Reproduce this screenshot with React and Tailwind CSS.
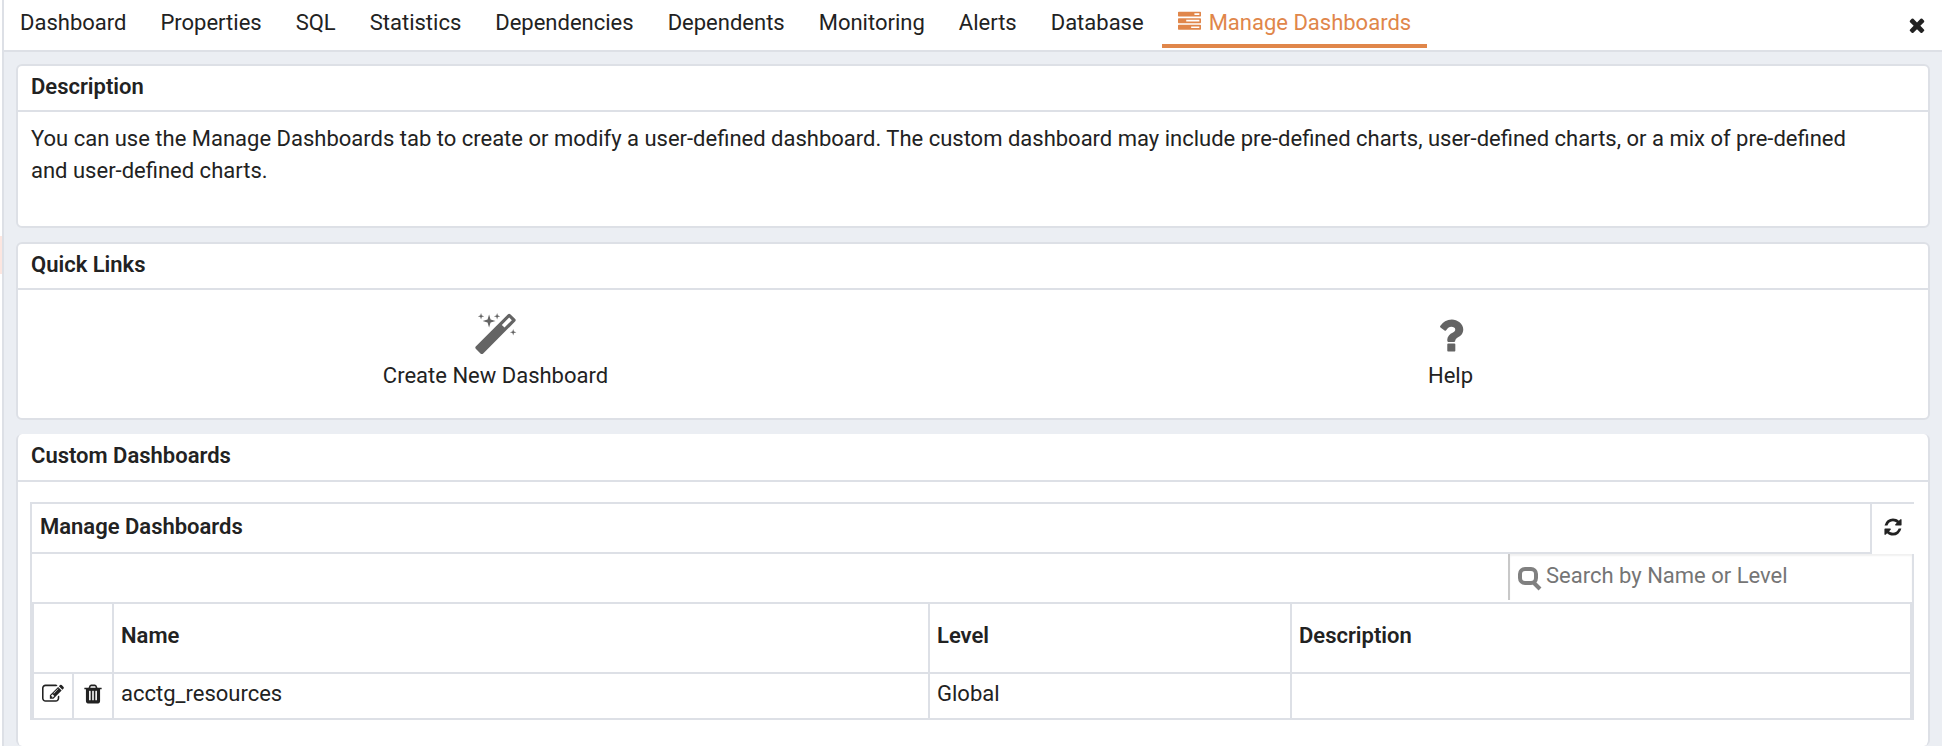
const ICONS = {
  tasks: "M1024 1408h640v-128h-640v128zm-384-512h1024v-128h-1024v128zm640-512h384v-128h-384v128zm512 832v256q0 26-19 45t-45 19h-1664q-26 0-45-19t-19-45v-256q0-26 19-45t45-19h1664q26 0 45 19t19 45zm0-512v256q0 26-19 45t-45 19h-1664q-26 0-45-19t-19-45v-256q0-26 19-45t45-19h1664q26 0 45 19t19 45zm0-512v256q0 26-19 45t-45 19h-1664q-26 0-45-19t-19-45v-256q0-26 19-45t45-19h1664q26 0 45 19t19 45z",
  refresh: "M1639 1056q0 5-1 7-64 268-268 434.5t-478 166.5q-146 0-282.5-55t-243.5-157l-129 129q-19 19-45 19t-45-19-19-45v-448q0-26 19-45t45-19h448q26 0 45 19t19 45-19 45l-137 137q71 66 161 102t187 36q134 0 250-65t186-179q11-17 53-117 8-23 30-23h192q13 0 22.5 9.5t9.5 22.5zm25-800v448q0 26-19 45t-45 19h-448q-26 0-45-19t-19-45 19-45l138-138q-148-137-349-137-134 0-250 65t-186 179q-11 17-53 117-8 23-30 23h-199q-13 0-22.5-9.5t-9.5-22.5v-7q65-268 270-434.5t480-166.5q146 0 284 55.5t245 156.5l130-129q19-19 45-19t45 19 19 45z",
  edit: "M888 1184l116-116-152-152-116 116v56h96v96h56zm440-720q-16-16-33 1l-350 350q-17 17-1 33t33-1l350-350q17-17 1-33zm80 594v190q0 119-84.5 203.5t-203.5 84.5h-832q-119 0-203.5-84.5t-84.5-203.5v-832q0-119 84.5-203.5t203.5-84.5h832q63 0 117 25 15 7 18 23 3 17-9 29l-49 49q-14 14-32 8-23-6-45-6h-832q-66 0-113 47t-47 113v832q0 66 47 113t113 47h832q66 0 113-47t47-113v-126q0-13 9-22l64-64q15-15 35-7t20 29zm-96-738l288 288-672 672h-288v-288zm444 132l-92 92-288-288 92-92q28-28 68-28t68 28l152 152q28 28 28 68t-28 68z",
  trash: "M704 1376v-704q0-14-9-23t-23-9h-64q-14 0-23 9t-9 23v704q0 14 9 23t23 9h64q14 0 23-9t9-23zm256 0v-704q0-14-9-23t-23-9h-64q-14 0-23 9t-9 23v704q0 14 9 23t23 9h64q14 0 23-9t9-23zm256 0v-704q0-14-9-23t-23-9h-64q-14 0-23 9t-9 23v704q0 14 9 23t23 9h64q14 0 23-9t9-23zm-544-992h448l-48-117q-7-9-17-11h-317q-10 2-17 11zm928 32v64q0 14-9 23t-23 9h-96v948q0 83-47 143.5t-113 60.5h-832q-66 0-113-58.5t-47-141.5v-952h-96q-14 0-23-9t-9-23v-64q0-14 9-23t23-9h309l70-167q15-37 54-63t79-26h320q40 0 79 26t54 63l70 167h309q14 0 23 9t9 23z",
  magic: "M1254 581l293-293-107-107-293 293zm447-293q0 27-18 45l-1286 1286q-18 18-45 18t-45-18l-198-198q-18-18-18-45t18-45l1286-1286q18-18 45-18t45 18l198 198q18 18 18 45zm-1351-190l98 30-98 30-30 98-30-98-98-30 98-30 30-98zm350 162l196 60-196 60-60 196-60-196-196-60 196-60 60-196zm930 478l98 30-98 30-30 98-30-98-98-30 98-30 30-98zm-640-640l98 30-98 30-30 98-30-98-98-30 98-30 30-98z",
  question: "M1088 1256v240q0 16-12 28t-28 12h-240q-16 0-28-12t-12-28v-240q0-16 12-28t28-12h240q16 0 28 12t12 28zm316-600q0 54-15.5 101t-35 76.5-55 59.5-57.5 43.5-61 35.5q-41 23-68.5 65t-27.5 67q0 17-12 32.5t-28 15.5h-240q-15 0-25.5-18.5t-10.5-37.5v-45q0-83 65-156.5t143-108.5q59-27 84-56t25-76q0-42-46.5-74t-107.5-32q-65 0-108 29-35 25-107 115-13 16-31 16-12 0-25-8l-164-125q-13-10-15.5-25t5.5-28q160-266 464-266 80 0 161 31t146 83 106 127.5 41 158.5z",
  times: "M1490 1322q0 40-28 68l-136 136q-28 28-68 28t-68-28l-294-294-294 294q-28 28-68 28t-68-28l-136-136q-28-28-28-68t28-68l294-294-294-294q-28-28-28-68t28-68l136-136q28-28 68-28t68 28l294 294 294-294q28-28 68-28t68 28l136 136q28 28 28 68t-28 68l-294 294 294 294q28 28 28 68z",
};

function Icon({ name, className }) {
  return (
    <svg viewBox="0 0 1792 1792" fill="currentColor" aria-hidden="true" className={className}>
      <path d={ICONS[name]} />
    </svg>
  );
}

const TABS = ["Dashboard", "Properties", "SQL", "Statistics", "Dependencies", "Dependents", "Monitoring", "Alerts", "Database"];

function Card({ title, frame = "border-2", headerHeight = "h-[46px]", children }) {
  return (
    <section className={`rounded-md border-[#dde0e6] bg-white ${frame}`}>
      <h2 className={`flex items-center border-b-2 border-[#dde0e6] px-[13px] pb-0.5 font-semibold ${headerHeight}`}>{title}</h2>
      {children}
    </section>
  );
}

const QUICK_LINKS = [
  { label: "Create New Dashboard", icon: "magic" },
  { label: "Help", icon: "question" },
];

const CELL = "border-2 border-[#dde0e6] px-[7px] pb-1";

export default function App() {
  return (
    <div className="flex min-h-screen bg-white font-['Roboto',sans-serif] text-[22px] leading-8 text-[#222222]">
      <div className="flex w-1 shrink-0 flex-col border-r-2 border-[#dde0e6] bg-white">
        <div className="mt-[236px] h-[38px] bg-[#fce6e0]" />
      </div>
      <div className="flex min-w-0 flex-1 flex-col">
        <header className="flex h-[52px] items-start justify-between border-b-2 border-[#dde0e6] bg-white">
          <nav className="flex gap-0.5">
            {TABS.map((tab) => (
              <a key={tab} href="#" className="h-12 px-4 pt-[7px]">{tab}</a>
            ))}
            <a href="#" aria-current="page" className="flex h-12 gap-2 border-b-4 border-[#e0864a] px-4 pt-[7px] text-[#e0864a]">
              <Icon name="tasks" className="mt-[3px] size-[23px]" />
              Manage Dashboards
            </a>
          </nav>
          <button type="button" aria-label="Close" className="mt-3.5 mr-3.5">
            <Icon name="times" className="size-[22px]" />
          </button>
        </header>
        <main className="flex flex-1 flex-col gap-3.5 bg-[#ebeef3] px-3 pt-3">
          <Card title="Description">
            <p className="min-h-[114px] pt-[11px] pr-12 pl-[13px]">
              You can use the Manage Dashboards tab to create or modify a user-defined dashboard. The custom dashboard may include pre-defined charts, user-defined charts, or a mix of pre-defined and user-defined charts.
            </p>
          </Card>
          <Card title="Quick Links">
            <div className="grid h-32 grid-cols-2">
              {QUICK_LINKS.map(({ label, icon }) => (
                <a key={label} href="#" className="flex flex-col items-center gap-0.5 pt-[23px]">
                  <Icon name={icon} className="size-[45px] text-[#646464]" />
                  {label}
                </a>
              ))}
            </div>
          </Card>
          <Card title="Custom Dashboards" frame="border-x-2" headerHeight="h-12">
            <div className="pt-5 pr-3.5 pb-[26px] pl-3">
              <div className="flex h-[52px] border-t-2 border-l-2 border-[#dde0e6]">
                <h3 className="flex flex-1 items-center border-r-2 border-b-2 border-[#dde0e6] px-2 pb-0.5 font-semibold">Manage Dashboards</h3>
                <button type="button" aria-label="Refresh" className="flex w-[42px] items-center justify-center pb-1">
                  <Icon name="refresh" className="size-5" />
                </button>
              </div>
              <div className="flex h-12 justify-end border-x-2 border-[#dde0e6]">
                <label className="flex h-[46px] w-[404px] items-center gap-1 border-l-2 border-[#c8c8c8] px-2 pb-0.5 shadow-[inset_0_2px_2px_rgba(0,0,0,0.06)]">
                  <svg viewBox="0 0 24 24" fill="none" stroke="#808080" aria-hidden="true" className="mt-1.5 size-6">
                    <rect x="2" y="2" width="16" height="14" rx="5" strokeWidth="4" />
                    <path d="M16 16l6 6" strokeWidth="4" />
                  </svg>
                  <input type="search" aria-label="Search dashboards" placeholder="Search by Name or Level" className="min-w-0 flex-1 outline-none placeholder:text-[#757575]" />
                </label>
              </div>
              <div className="border-x-2 border-[#dde0e6]">
                <table className="w-full table-fixed border-collapse text-left">
                  <colgroup>
                    <col className="w-10" />
                    <col className="w-10" />
                    <col />
                    <col className="w-[362px]" />
                    <col className="w-[620px]" />
                  </colgroup>
                  <thead>
                    <tr className="h-[70px]">
                      <th colSpan={2} className={CELL} aria-label="Actions" />
                      <th className={`${CELL} font-semibold`}>Name</th>
                      <th className={`${CELL} font-semibold`}>Level</th>
                      <th className={`${CELL} font-semibold`}>Description</th>
                    </tr>
                  </thead>
                  <tbody>
                    <tr className="h-[46px]">
                      <td className="border-2 border-[#dde0e6] pb-1">
                        <button type="button" aria-label="Edit" className="mx-auto block"><Icon name="edit" className="size-[22px]" /></button>
                      </td>
                      <td className="border-2 border-[#dde0e6] pb-1">
                        <button type="button" aria-label="Delete" className="mx-auto block"><Icon name="trash" className="size-[22px]" /></button>
                      </td>
                      <td className={CELL}>acctg_resources</td>
                      <td className={CELL}>Global</td>
                      <td className={CELL} />
                    </tr>
                  </tbody>
                </table>
              </div>
            </div>
          </Card>
        </main>
      </div>
    </div>
  );
}
